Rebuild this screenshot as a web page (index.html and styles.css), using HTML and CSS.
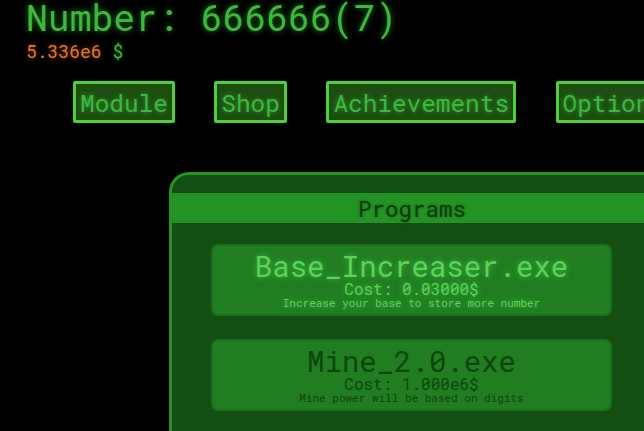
FILE: index.html
```html
<!DOCTYPE html>
<html lang="en">
<head>
    <meta charset="UTF-8">
    <meta name="viewport" content="width=device-width, initial-scale=1.0">
    <title>Number</title>
    <link rel="stylesheet" href="styles.css">
</head>
<body>

<div class="top">
    <div class="number">Number: 666666(7)</div>
    <div class="money"><span class="money-value">5.336e6</span> $</div>
</div>

<nav class="tabs">
    <button class="tab">Module</button>
    <button class="tab">Shop</button>
    <button class="tab">Achievements</button>
    <button class="tab">Options</button>
</nav>

<div class="panel">
    <div class="panel-title">Programs</div>

    <div class="program program-buyable">
        <div class="program-name">Base_Increaser.exe</div>
        <div class="program-cost">Cost: 0.03000$</div>
        <div class="program-desc">Increase your base to store more number</div>
    </div>

    <div class="program">
        <div class="program-name">Mine_2.0.exe</div>
        <div class="program-cost">Cost: 1.000e6$</div>
        <div class="program-desc">Mine power will be based on digits</div>
    </div>
</div>

</body>
</html>
```

FILE: styles.css
```css
/* page */
body {
    margin: 0;
    background-color: #000;
    font-family: "Roboto Mono", "DejaVu Sans Mono", "Liberation Mono", monospace;
    overflow: hidden;
    height: 431px;
}
/* number and money */
.top {
    padding: 0 26px;
}
.number {
    margin-top: -4px;
    font-size: 36.4px;
    line-height: 42px;
    color: #3cb83c;
    text-shadow: 0 0 6px rgba(60, 200, 60, 0.6);
    white-space: nowrap;
}
.money {
    margin-top: 1px;
    font-size: 18px;
    line-height: 24px;
    color: #3cb83c;
    text-shadow: 0 0 5px rgba(60, 200, 60, 0.5);
}
.money-value {
    color: #e5772a;
    text-shadow: 0 0 5px rgba(230, 120, 40, 0.5);
}
/* tabs */
.tabs {
    display: flex;
    gap: 39.5px;
    margin-top: 18px;
    padding-left: 73px;
    white-space: nowrap;
}
.tab {
    flex: none;
    height: 42px;
    padding: 0 4px;
    font-family: inherit;
    font-size: 24.4px;
    color: #3cb83c;
    background-color: #1e4d12;
    border: 3px solid #4fd13a;
    border-radius: 2px;
    text-shadow: 0 0 5px rgba(60, 200, 60, 0.6);
    cursor: pointer;
}
/* programs panel */
.panel {
    margin: 49px 0 0 169px;
    width: 600px;
    height: 300px;
    padding-top: 18px;
    background-color: #134f13;
    border: 3px solid #259325;
    border-bottom: none;
    border-radius: 20px 20px 0 0;
}
.panel-title {
    height: 30px;
    line-height: 30px;
    padding-left: 186px;
    font-size: 22.5px;
    color: #0e3c0e;
    background-color: #239323;
    text-shadow: 0 0 3px rgba(0, 0, 0, 0.3);
}
.program {
    width: 401px;
    height: 72px;
    margin: 21px 0 0 39px;
    padding-top: 5px;
    text-align: center;
    color: #0f460f;
    background-color: #207d20;
    border: 2px solid #1d6d1d;
    border-radius: 7px;
    box-sizing: border-box;
}
.program + .program {
    margin-top: 23px;
}
.program-buyable {
    color: #5ad35a;
    text-shadow: 0 0 6px rgba(90, 220, 90, 0.6);
}
.program-name {
    font-size: 29px;
    line-height: 30px;
}
.program-cost {
    font-size: 16px;
    line-height: 16px;
}
.program-desc {
    font-size: 11px;
    line-height: 12px;
}
```
